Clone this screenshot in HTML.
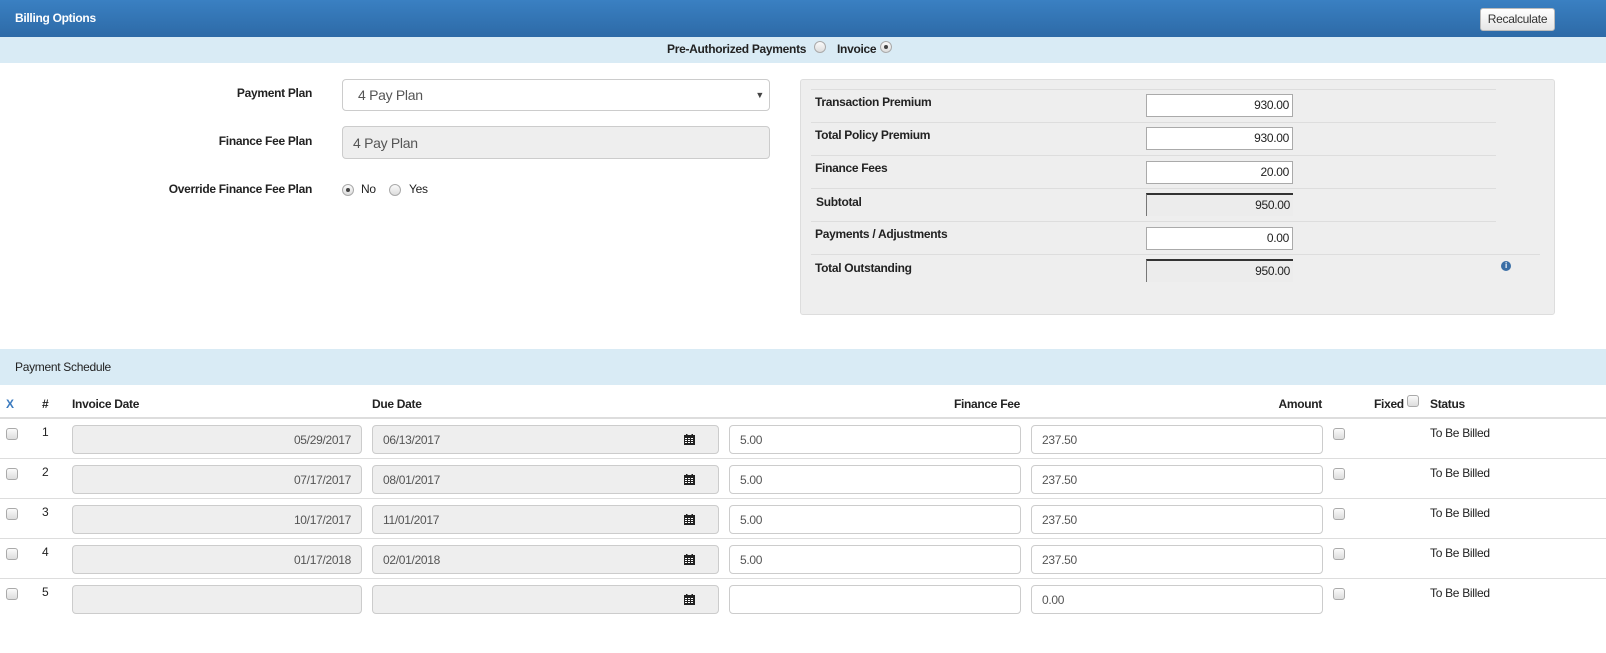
<!DOCTYPE html>
<html><head><meta charset="utf-8"><style>
*{box-sizing:border-box;margin:0;padding:0}
body{width:1606px;height:653px;position:relative;background:#fff;font-family:"Liberation Sans",Arial,sans-serif;font-size:12px;color:#222;overflow:hidden;letter-spacing:-0.3px}
.a{position:absolute}
.b{font-weight:bold}
.inp{position:absolute;border:1px solid #ccc;border-radius:4px;background:#fff;font-size:12px;color:#555;padding:0 10px;display:flex;align-items:center}
.ro{background:#eee}
.cb{position:absolute;width:12px;height:12px;border:1px solid #aaa;border-radius:3px;background:linear-gradient(#fafafa,#ddd)}
.rad{position:absolute;width:12px;height:12px;border:1px solid #aaa;border-radius:50%;background:linear-gradient(#fafafa,#ddd)}
.rad.on::after{content:"";position:absolute;left:3px;top:3px;width:4px;height:4px;border-radius:50%;background:#444}
.tin{position:absolute;left:1146px;width:147px;height:23px;border:1px solid #aaa;background:#fff;text-align:right;padding-right:3px;line-height:21px;font-size:12px}
.tro{background:#ececec;border:none;border-top:2px solid #333;border-left:1px solid #777}
.hl{position:absolute;left:811px;height:1px;background:#ddd}
.cal{position:absolute;width:11px;height:11px}
</style></head><body>
<div class="a" style="left:0;top:0;width:1606px;height:37px;background:linear-gradient(#3a80c2,#2d6aa7)"></div>
<div class="a b" style="left:15px;top:11px;color:#fff">Billing Options</div>
<div class="a" style="left:1480px;top:8px;width:75px;height:23px;border:1px solid #bbb;border-radius:3px;background:linear-gradient(#fff,#e6e6e6);font-size:12px;text-align:center;line-height:21px;color:#333">Recalculate</div>
<div class="a" style="left:0;top:37px;width:1606px;height:26px;background:#d9ebf5"></div>
<div class="a b" style="left:667px;top:42px">Pre-Authorized Payments</div>
<div class="rad" style="left:814px;top:41px"></div>
<div class="a b" style="left:837px;top:42px">Invoice</div>
<div class="rad on" style="left:880px;top:41px"></div>

<div class="a b" style="left:0;width:312px;text-align:right;top:86px">Payment Plan</div>
<div class="inp" style="left:342px;top:79px;width:428px;height:32px;font-size:14px;padding-left:15px">4 Pay Plan<span style="position:absolute;right:5px;font-size:9px;color:#444">▼</span></div>
<div class="a b" style="left:0;width:312px;text-align:right;top:134px">Finance Fee Plan</div>
<div class="inp ro" style="left:342px;top:126px;width:428px;height:33px;font-size:14px">4 Pay Plan</div>
<div class="a b" style="left:0;width:312px;text-align:right;top:182px">Override Finance Fee Plan</div>
<div class="rad on" style="left:342px;top:184px"></div>
<div class="a" style="left:361px;top:182px">No</div>
<div class="rad" style="left:389px;top:184px"></div>
<div class="a" style="left:409px;top:182px">Yes</div>

<div class="a" style="left:800px;top:79px;width:755px;height:236px;background:#eee;border:1px solid #ddd;border-radius:3px"></div>
<div class="hl" style="top:89px;width:685px"></div>
<div class="hl" style="top:122px;width:685px"></div>
<div class="hl" style="top:155px;width:685px"></div>
<div class="hl" style="top:188px;width:685px"></div>
<div class="hl" style="top:221px;width:685px"></div>
<div class="hl" style="top:254px;width:729px"></div>
<div class="a b" style="left:815px;top:95px">Transaction Premium</div>
<div class="tin" style="top:94px">930.00</div>
<div class="a b" style="left:815px;top:128px">Total Policy Premium</div>
<div class="tin" style="top:127px">930.00</div>
<div class="a b" style="left:815px;top:161px">Finance Fees</div>
<div class="tin" style="top:161px">20.00</div>
<div class="a b" style="left:816px;top:195px">Subtotal</div>
<div class="tin tro" style="top:193px">950.00</div>
<div class="a b" style="left:815px;top:227px">Payments / Adjustments</div>
<div class="tin" style="top:227px">0.00</div>
<div class="a b" style="left:815px;top:261px">Total Outstanding</div>
<div class="tin tro" style="top:259px">950.00</div>
<div class="a" style="left:1501px;top:261px;width:10px;height:10px;border-radius:50%;background:#3a6ea5;color:#fff;font-size:8px;font-weight:bold;text-align:center;line-height:10px">i</div>

<div class="a" style="left:0;top:349px;width:1606px;height:36px;background:#d9ebf5"></div>
<div class="a" style="left:15px;top:360px">Payment Schedule</div>
<div class="a b" style="left:6px;top:397px;color:#3a7abf">X</div>
<div class="a b" style="left:42px;top:397px">#</div>
<div class="a b" style="left:72px;top:397px">Invoice Date</div>
<div class="a b" style="left:372px;top:397px">Due Date</div>
<div class="a b" style="left:700px;width:320px;text-align:right;top:397px">Finance Fee</div>
<div class="a b" style="left:1100px;width:222px;text-align:right;top:397px">Amount</div>
<div class="a b" style="left:1374px;top:397px">Fixed</div>
<div class="cb" style="left:1407px;top:395px"></div>
<div class="a b" style="left:1430px;top:397px">Status</div>
<div class="a" style="left:0;top:417px;width:1606px;height:2px;background:#ddd"></div>

<div id="rows"></div>
<script>
var d=[["1","05/29/2017","06/13/2017","5.00","237.50"],["2","07/17/2017","08/01/2017","5.00","237.50"],["3","10/17/2017","11/01/2017","5.00","237.50"],["4","01/17/2018","02/01/2018","5.00","237.50"],["5","","","","0.00"]];
var cal='<svg class="cal" viewBox="0 0 11 11"><rect x="0" y="1" width="11" height="10" fill="#222"/><rect x="2" y="0" width="1.5" height="2" fill="#222"/><rect x="7.5" y="0" width="1.5" height="2" fill="#222"/><g fill="#fff"><rect x="1" y="4" width="2" height="1"/><rect x="4" y="4" width="2" height="1"/><rect x="7" y="4" width="2" height="1"/><rect x="1" y="6" width="2" height="1"/><rect x="4" y="6" width="2" height="1"/><rect x="7" y="6" width="2" height="1"/><rect x="1" y="8" width="2" height="1"/><rect x="4" y="8" width="2" height="1"/><rect x="7" y="8" width="2" height="1"/></g></svg>';
var h='';
d.forEach(function(r,i){var t=425+i*40;
if(i>0)h+='<div class="a" style="left:0;top:'+(t-7)+'px;width:1606px;height:1px;background:#ddd"></div>';
h+='<div class="cb" style="left:6px;top:'+(t+3)+'px"></div>';
h+='<div class="a" style="left:42px;top:'+t+'px">'+r[0]+'</div>';
h+='<div class="inp ro" style="left:72px;top:'+t+'px;width:290px;height:29px;justify-content:flex-end;padding-right:10px">'+r[1]+'</div>';
h+='<div class="inp ro" style="left:372px;top:'+t+'px;width:347px;height:29px">'+r[2]+'<span style="position:absolute;left:311px;top:8px">'+cal+'</span></div>';
h+='<div class="inp" style="left:729px;top:'+t+'px;width:292px;height:29px">'+r[3]+'</div>';
h+='<div class="inp" style="left:1031px;top:'+t+'px;width:292px;height:29px">'+r[4]+'</div>';
h+='<div class="cb" style="left:1333px;top:'+(t+3)+'px"></div>';
h+='<div class="a" style="left:1430px;top:'+(t+1)+'px">To Be Billed</div>';
});
document.getElementById('rows').innerHTML=h;
</script>
</body></html>
